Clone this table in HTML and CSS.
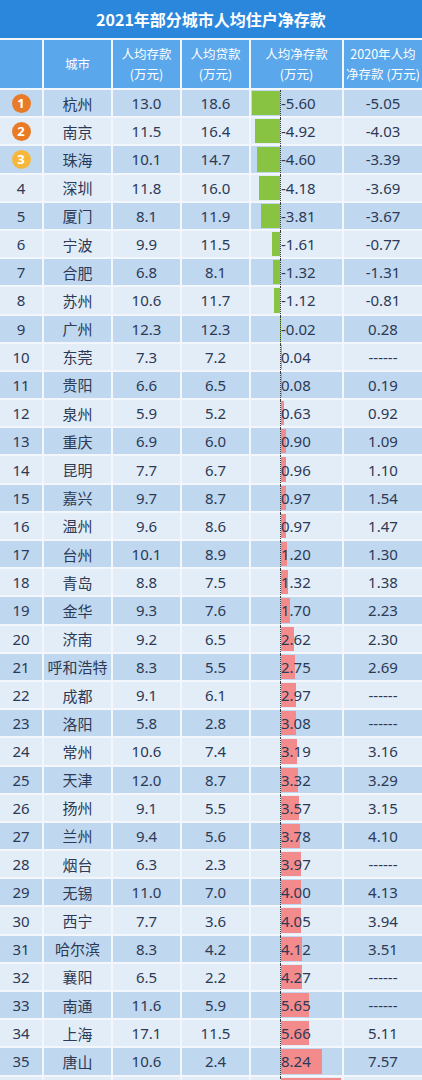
FILE: index.html
```html
<!DOCTYPE html>
<html lang="zh">
<head>
<meta charset="utf-8">
<link rel="stylesheet" href="styles.css">
</head>
<body>
<div class="sheet">
  <div class="title">2021年部分城市人均住户净存款</div>
  <div class="row head">
    <div class="c"></div>
    <div class="c">城市</div>
    <div class="c">人均存款<br>(万元)</div>
    <div class="c">人均贷款<br>(万元)</div>
    <div class="c">人均净存款<br>(万元)</div>
    <div class="c">2020年人均<br>净存款 (万元)</div>
  </div>
  <div id="body"></div>
</div>
<script src="app.js"></script>
</body>
</html>
```

FILE: app.js
```js
const data = [
["杭州","13.0","18.6","-5.60","-5.05"],
["南京","11.5","16.4","-4.92","-4.03"],
["珠海","10.1","14.7","-4.60","-3.39"],
["深圳","11.8","16.0","-4.18","-3.69"],
["厦门","8.1","11.9","-3.81","-3.67"],
["宁波","9.9","11.5","-1.61","-0.77"],
["合肥","6.8","8.1","-1.32","-1.31"],
["苏州","10.6","11.7","-1.12","-0.81"],
["广州","12.3","12.3","-0.02","0.28"],
["东莞","7.3","7.2","0.04","------"],
["贵阳","6.6","6.5","0.08","0.19"],
["泉州","5.9","5.2","0.63","0.92"],
["重庆","6.9","6.0","0.90","1.09"],
["昆明","7.7","6.7","0.96","1.10"],
["嘉兴","9.7","8.7","0.97","1.54"],
["温州","9.6","8.6","0.97","1.47"],
["台州","10.1","8.9","1.20","1.30"],
["青岛","8.8","7.5","1.32","1.38"],
["金华","9.3","7.6","1.70","2.23"],
["济南","9.2","6.5","2.62","2.30"],
["呼和浩特","8.3","5.5","2.75","2.69"],
["成都","9.1","6.1","2.97","------"],
["洛阳","5.8","2.8","3.08","------"],
["常州","10.6","7.4","3.19","3.16"],
["天津","12.0","8.7","3.32","3.29"],
["扬州","9.1","5.5","3.57","3.15"],
["兰州","9.4","5.6","3.78","4.10"],
["烟台","6.3","2.3","3.97","------"],
["无锡","11.0","7.0","4.00","4.13"],
["西宁","7.7","3.6","4.05","3.94"],
["哈尔滨","8.3","4.2","4.12","3.51"],
["襄阳","6.5","2.2","4.27","------"],
["南通","11.6","5.9","5.65","------"],
["上海","17.1","11.5","5.66","5.11"],
["唐山","10.6","2.4","8.24","7.57"],
["","","","12.00",""]
];
const body = document.getElementById("body");
const scale = 5;
let html = "";
data.forEach((d, i) => {
  const n = i + 1;
  const last = i === data.length - 1;
  const v = parseFloat(d[3]);
  let rank;
  if (last) rank = "";
  else if (n <= 3) rank = `<span class="badge b${n}">${n}</span>`;
  else rank = `${n}`;
  const negW = v < 0 ? (-v * scale).toFixed(1) : 0;
  const posW = v > 0 ? Math.min(v * scale, 62).toFixed(1) : 0;
  const label = last ? "" : d[3];
  html += `<div class="row ${n % 2 ? "dark" : "light"}">
    <div class="c">${rank}</div>
    <div class="c">${d[0]}</div>
    <div class="c">${d[1]}</div>
    <div class="c">${d[2]}</div>
    <div class="c net">
      <div class="neg"><i class="bar g" style="width:${negW}px"></i></div>
      <div class="pos"><i class="bar r" style="width:${posW}px"></i><span class="v">${label}</span></div>
    </div>
    <div class="c">${d[4]}</div>
  </div>`;
});
body.innerHTML = html;
```

FILE: styles.css
```css
html, body {
  margin: 0;
  padding: 0;
  background: #ffffff;
}
body {
  width: 422px;
  height: 1080px;
  overflow: hidden;
  font-family: "Noto Sans", "Noto Sans CJK SC", sans-serif;
  color: #2c3a56;
}
.sheet {
  width: 422px;
  background: #f3f7fc;
}
.title {
  height: 38px;
  background: #2b87dc;
  color: #ffffff;
  font-weight: bold;
  font-size: 16px;
  display: flex;
  align-items: center;
  justify-content: center;
  font-family: "Noto Sans CJK SC", sans-serif;
}
.row {
  display: grid;
  grid-template-columns: 42px 67px 67px 67px 91px 78px;
  column-gap: 2px;
  margin-top: 2px;
  height: 26.2px;
}
.row .c {
  display: flex;
  align-items: center;
  justify-content: center;
  font-size: 15px;
  white-space: nowrap;
}
.row.head {
  height: 48px;
}
.row.head .c {
  background: #5aa7ec;
  color: #ffffff;
  font-size: 12.5px;
  line-height: 20px;
  text-align: center;
  font-family: "Noto Sans CJK SC", sans-serif;
}
.row.dark .c { background: #bfd7ef; }
.row.light .c { background: #e3edf7; }
.badge {
  width: 19px;
  height: 19px;
  border-radius: 50%;
  color: #ffffff;
  font-size: 13px;
  font-weight: bold;
  display: flex;
  align-items: center;
  justify-content: center;
}
.b1, .b2 { background: #ea7b26; }
.b3 { background: #f6b73a; }
.row .c.net {
  display: grid;
  grid-template-columns: 29px 1fr;
  justify-content: stretch;
  align-items: stretch;
}
.neg {
  display: flex;
  justify-content: flex-end;
  padding: 1px 0;
}
.pos {
  display: grid;
  border-left: 1px dotted #3a3a3a;
  margin-bottom: -2px;
  padding: 1px 0 3px;
}
.pos > * {
  grid-area: 1 / 1;
}
.bar {
  display: block;
  height: 100%;
}
.bar.g { background: #88c441; }
.bar.r { background: #f38b8d; justify-self: start; }
.v {
  align-self: center;
  position: relative;
}
```
